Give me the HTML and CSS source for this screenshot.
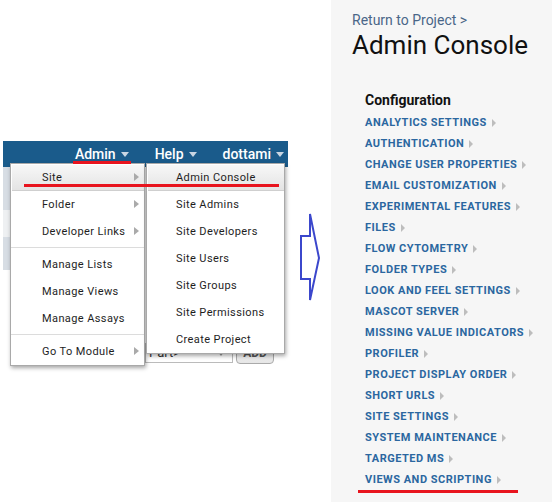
FILE: index.html
```html
<!DOCTYPE html>
<html>
<head>
<meta charset="utf-8">
<link rel="stylesheet" href="styles.css">
</head>
<body>
<div class="stage">
  <div class="left">
    <div class="shot">
      <div class="topbar">
        <span class="nav-item">Admin<i class="caret"></i></span>
        <span class="nav-item">Help<i class="caret"></i></span>
        <span class="nav-item">dottami<i class="caret"></i></span>
      </div>
      <div class="page">
        <div class="strip">
          <span class="seg seg-a"></span>
          <span class="seg seg-b"></span>
          <span class="seg seg-a seg-c"></span>
        </div>
        <div class="page-body">
          <div class="select">Part&gt;<i class="sel-caret"></i></div>
          <div class="btn">ADD</div>
        </div>
        <div class="menu menu1">
          <div class="mi active sub">Site</div>
          <div class="mi sub">Folder</div>
          <div class="mi sub">Developer Links</div>
          <div class="sep"></div>
          <div class="mi">Manage Lists</div>
          <div class="mi">Manage Views</div>
          <div class="mi">Manage Assays</div>
          <div class="sep"></div>
          <div class="mi sub">Go To Module</div>
        </div>
        <div class="menu menu2">
          <div class="mi active">Admin Console</div>
          <div class="mi">Site Admins</div>
          <div class="mi">Site Developers</div>
          <div class="mi">Site Users</div>
          <div class="mi">Site Groups</div>
          <div class="mi">Site Permissions</div>
          <div class="mi">Create Project</div>
        </div>
        <span class="mark mark-admin"></span>
        <span class="mark mark-site"></span>
      </div>
    </div>
  </div>
  <div class="arrow-col">
    <svg class="big-arrow" width="22" height="90" viewBox="0 0 22 90">
      <polygon points="2,24 11,24 11,2 20,46 11,88 11,67 2,67" fill="#fff" stroke="#3b47cc" stroke-width="2" stroke-linejoin="miter"/>
    </svg>
  </div>
  <aside class="console">
    <div class="return">Return to Project &gt;</div>
    <h1 class="title">Admin Console</h1>
    <div class="config">
      <h2>Configuration</h2>
      <ul class="links">
        <li><a>Analytics Settings</a></li>
        <li><a>Authentication</a></li>
        <li><a>Change User Properties</a></li>
        <li><a>Email Customization</a></li>
        <li><a>Experimental Features</a></li>
        <li><a>Files</a></li>
        <li><a>Flow Cytometry</a></li>
        <li><a>Folder Types</a></li>
        <li><a>Look and Feel Settings</a></li>
        <li><a>Mascot Server</a></li>
        <li><a>Missing Value Indicators</a></li>
        <li><a>Profiler</a></li>
        <li><a>Project Display Order</a></li>
        <li><a>Short URLs</a></li>
        <li><a>Site Settings</a></li>
        <li><a>System Maintenance</a></li>
        <li><a>Targeted MS</a></li>
        <li><a>Views and Scripting</a></li>
      </ul>
    </div>
    <span class="mark mark-views"></span>
  </aside>
</div>
</body>
</html>
```

FILE: styles.css
```css
html, body {
  margin: 0;
  padding: 0;
}
body {
  width: 552px;
  height: 502px;
  overflow: hidden;
  background: #fff;
  font-family: Roboto, "Liberation Sans", Arial, sans-serif;
}
.stage {
  display: flex;
  height: 502px;
}
.left {
  width: 290px;
  flex: none;
  padding-top: 141px;
  box-sizing: border-box;
}
.shot {
  margin-left: 3px;
  width: 285px;
}
.topbar {
  height: 26px;
  background: #1a5b8b;
  display: flex;
  justify-content: flex-end;
  align-items: center;
  gap: 26px;
  padding-right: 4px;
  color: #fff;
  font-size: 14px;
  font-weight: 500;
}
.nav-item {
  display: flex;
  align-items: center;
  height: 26px;
}
.caret {
  width: 0;
  height: 0;
  border-left: 4px solid transparent;
  border-right: 4px solid transparent;
  border-top: 5px solid #c9d6e3;
  margin-left: 5px;
  margin-top: 1px;
}
.page {
  position: relative;
  height: 200px;
  display: flex;
}
.strip {
  width: 7px;
  display: flex;
  flex-direction: column;
}
.seg-a {
  height: 43px;
  background: #d7dde4;
}
.seg-b {
  height: 27px;
  background: #eef0f2;
}
.seg-c {
  height: 33px;
}
.page-body {
  flex: 1;
  padding: 176px 0 0 135px;
  display: flex;
  align-items: flex-start;
  gap: 3px;
}
.select {
  width: 83px;
  height: 18px;
  border: 1px solid #bbb;
  font-size: 13px;
  line-height: 18px;
  padding-left: 3px;
  color: #333;
  position: relative;
}
.sel-caret {
  position: absolute;
  right: 8px;
  top: 8px;
  border-left: 3px solid transparent;
  border-right: 3px solid transparent;
  border-top: 4px solid #999;
}
.btn {
  width: 36px;
  height: 19px;
  border: 1px solid #aaa;
  border-radius: 4px;
  background: linear-gradient(#fafafa, #e6e6e6);
  font-size: 12px;
  font-weight: 700;
  line-height: 19px;
  text-align: center;
  color: #555;
}
.menu {
  position: absolute;
  top: -4px;
  background: #fff;
  border: 1px solid #a9a9a9;
  box-shadow: 1px 2px 4px rgba(0, 0, 0, 0.35);
}
.menu1 {
  left: 7px;
  width: 133px;
}
.menu2 {
  left: 143px;
  width: 137px;
}
.mi {
  height: 27px;
  display: flex;
  align-items: center;
  font-size: 11px;
  letter-spacing: 0.4px;
  color: #1e1e1e;
  position: relative;
  box-sizing: border-box;
}
.menu1 .mi {
  padding-left: 31px;
}
.menu2 .mi {
  padding-left: 29px;
}
.mi.active {
  background: linear-gradient(#f8f8f8, #e3e3e3);
  box-shadow: inset 1px 1px 0 #fff, inset 0 -1px 0 #cfcfcf;
}
.mi.sub::after {
  content: "";
  position: absolute;
  right: 5px;
  top: 9px;
  border-top: 4px solid transparent;
  border-bottom: 4px solid transparent;
  border-left: 5px solid #aaa;
}
.sep {
  height: 1px;
  background: #dcdcdc;
  margin: 2px 0 3px;
}
.mark {
  position: absolute;
  height: 3px;
  background: #e8141e;
}
.mark-admin {
  left: 70px;
  top: -6px;
  width: 58px;
}
.mark-site {
  left: 21px;
  top: 17px;
  width: 255px;
}
.arrow-col {
  width: 41px;
  flex: none;
  padding: 212px 0 0 9px;
  box-sizing: border-box;
}
.big-arrow {
  display: block;
}
.console {
  width: 221px;
  flex: none;
  background: #f6f6f6;
  padding: 12px 0 0 21px;
  box-sizing: border-box;
  position: relative;
}
.return {
  font-size: 14px;
  line-height: 16px;
  color: #4a6688;
}
.title {
  margin: 2px 0 0;
  font-size: 26px;
  line-height: 30px;
  font-weight: 400;
  color: #111;
}
.config {
  margin: 30px 0 0 13px;
}
.config h2 {
  margin: 0;
  font-size: 14px;
  line-height: 20px;
  font-weight: 700;
  color: #111;
}
.links {
  list-style: none;
  margin: 2px 0 0;
  padding: 0;
}
.links li {
  height: 21px;
  display: flex;
  align-items: center;
}
.links a {
  font-size: 11px;
  font-weight: 700;
  letter-spacing: 0.5px;
  text-transform: uppercase;
  color: #2b67a0;
}
.links li::after {
  content: "";
  margin-left: 5px;
  border-top: 4px solid transparent;
  border-bottom: 4px solid transparent;
  border-left: 4px solid #bdbdbd;
}
.mark-views {
  left: 27px;
  top: 490px;
  width: 160px;
}
```
